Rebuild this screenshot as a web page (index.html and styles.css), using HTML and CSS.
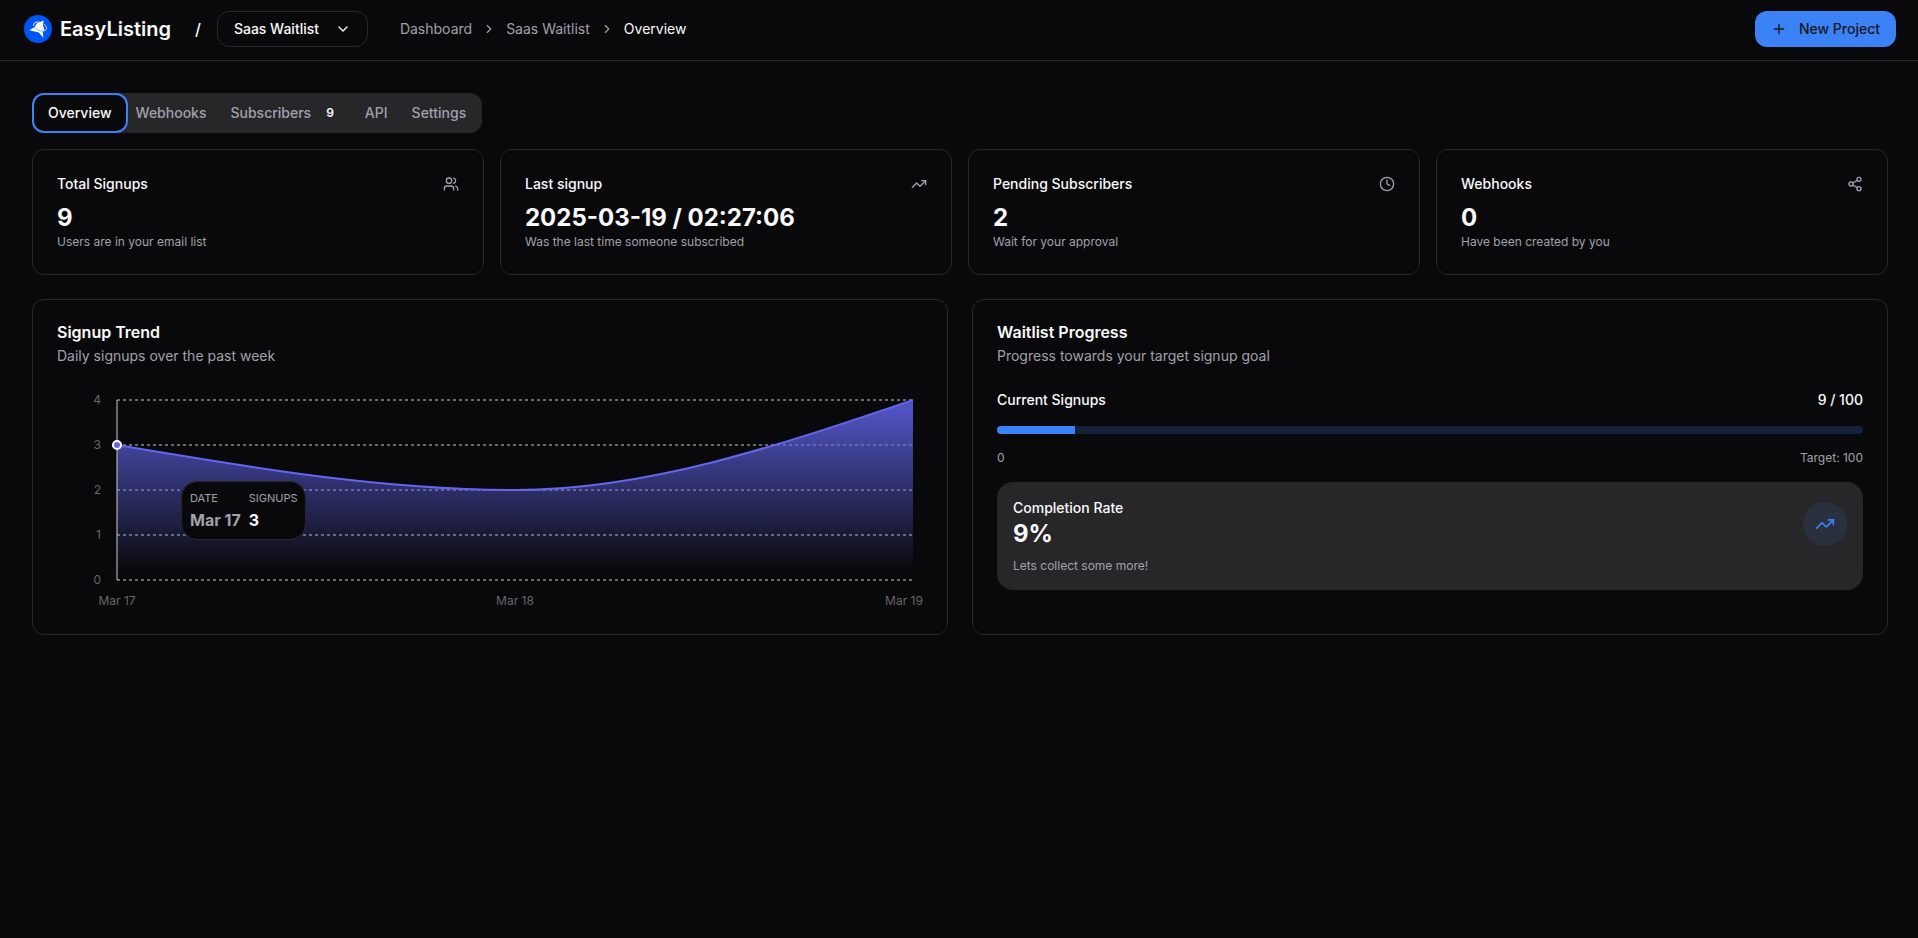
FILE: index.html
```html
<!DOCTYPE html>
<html lang="en">
  <head>
    <meta charset="UTF-8" />
    <meta name="viewport" content="width=device-width, initial-scale=1.0" />
    <title>EasyListing - Saas Waitlist</title>
    <link rel="stylesheet" href="styles.css">
  </head>
  <body>
    <header class="header">
      <a class="brand" href="#">
        <svg class="brand-logo" viewBox="0 0 28 28" aria-hidden="true">
          <circle cx="14" cy="14" r="14" fill="#0055f5" />
          <path d="M5.2 15.2 L10.8 12 L12.6 8.6 L19.6 5.6 L19 10.6 L20.4 14.8 L18.8 17 L19.4 22.8 L14.8 17.6 Z" fill="#fff" />
          <path d="M10 11 C8.4 8.2 12 6.4 15.6 7.2 M20 9.2 C23.8 12.4 22.8 15.8 19.4 16" fill="none" stroke="#fff" stroke-width="0.9" />
          <path d="M10 11.2 C12 14.6 16.6 16.6 20 16" fill="none" stroke="#0055f5" stroke-width="0.5" />
        </svg>
        <span>EasyListing</span>
      </a>
      <span class="slash">/</span>
      <div class="project-picker">
        <select class="project-select" aria-label="Project">
          <option>Saas Waitlist</option>
        </select>
        <svg class="icon picker-arrow" viewBox="0 0 24 24" aria-hidden="true"><path d="m6 9 6 6 6-6" /></svg>
      </div>
      <nav class="breadcrumb" aria-label="Breadcrumb">
        <a href="#">Dashboard</a>
        <svg class="icon icon-sm" viewBox="0 0 24 24" aria-hidden="true"><path d="m9 18 6-6-6-6" /></svg>
        <a href="#">Saas Waitlist</a>
        <svg class="icon icon-sm" viewBox="0 0 24 24" aria-hidden="true"><path d="m9 18 6-6-6-6" /></svg>
        <span class="current">Overview</span>
      </nav>
      <button class="new-project" type="button">
        <svg class="icon" viewBox="0 0 24 24" aria-hidden="true"><path d="M5 12h14M12 5v14" /></svg>
        New Project
      </button>
    </header>

    <main class="main">
      <div class="tabs" role="tablist">
        <button class="tab active" type="button" role="tab" aria-selected="true">Overview</button>
        <button class="tab" type="button" role="tab">Webhooks</button>
        <button class="tab" type="button" role="tab">Subscribers <span class="badge">9</span></button>
        <button class="tab" type="button" role="tab">API</button>
        <button class="tab" type="button" role="tab">Settings</button>
      </div>

      <section class="stats">
        <article class="card">
          <div class="stat-head">
            <h3>Total Signups</h3>
            <svg class="icon" viewBox="0 0 24 24" aria-hidden="true">
              <path d="M16 21v-2a4 4 0 0 0-4-4H6a4 4 0 0 0-4 4v2" />
              <circle cx="9" cy="7" r="4" />
              <path d="M22 21v-2a4 4 0 0 0-3-3.87M16 3.13a4 4 0 0 1 0 7.75" />
            </svg>
          </div>
          <div class="value">9</div>
          <p class="note">Users are in your email list</p>
        </article>
        <article class="card">
          <div class="stat-head">
            <h3>Last signup</h3>
            <svg class="icon" viewBox="0 0 24 24" aria-hidden="true">
              <path d="M22 7 13.5 15.5 8.5 10.5 2 17" />
              <path d="M16 7h6v6" />
            </svg>
          </div>
          <div class="value">2025-03-19 / 02:27:06</div>
          <p class="note">Was the last time someone subscribed</p>
        </article>
        <article class="card">
          <div class="stat-head">
            <h3>Pending Subscribers</h3>
            <svg class="icon" viewBox="0 0 24 24" aria-hidden="true">
              <circle cx="12" cy="12" r="10" />
              <path d="M12 6v6l4 2" />
            </svg>
          </div>
          <div class="value">2</div>
          <p class="note">Wait for your approval</p>
        </article>
        <article class="card">
          <div class="stat-head">
            <h3>Webhooks</h3>
            <svg class="icon" viewBox="0 0 24 24" aria-hidden="true">
              <circle cx="18" cy="5" r="3" />
              <circle cx="6" cy="12" r="3" />
              <circle cx="18" cy="19" r="3" />
              <path d="M8.59 13.51l6.83 3.98M15.41 6.51l-6.82 3.98" />
            </svg>
          </div>
          <div class="value">0</div>
          <p class="note">Have been created by you</p>
        </article>
      </section>

      <section class="panels">
        <article class="card">
          <h2>Signup Trend</h2>
          <p class="description">Daily signups over the past week</p>
          <div class="chart">
            <svg class="chart-svg" viewBox="0 0 866 220" role="img" aria-label="Signups per day">
              <defs>
                <linearGradient id="signups" x1="0" y1="0" x2="0" y2="1">
                  <stop offset="5%" stop-color="#6366f1" stop-opacity="0.8" />
                  <stop offset="95%" stop-color="#6366f1" stop-opacity="0" />
                </linearGradient>
              </defs>
              <g class="grid-lines">
                <path d="M60 10H856M60 55H856M60 100H856M60 145H856M60 190H856" />
              </g>
              <g class="axis y-axis">
                <text x="44" y="14">4</text>
                <text x="44" y="59">3</text>
                <text x="44" y="104">2</text>
                <text x="44" y="149">1</text>
                <text x="44" y="194">0</text>
              </g>
              <g class="axis x-axis">
                <text x="60" y="215">Mar 17</text>
                <text x="458" y="215">Mar 18</text>
                <text x="847" y="215">Mar 19</text>
              </g>
              <path d="M60 55C192.7 77.5 325.3 100 458 100C590.7 100 723.3 55 856 10V190H60Z" fill="url(#signups)" />
              <path class="trend" d="M60 55C192.7 77.5 325.3 100 458 100C590.7 100 723.3 55 856 10" />
              <path class="cursor" d="M60 10V190" />
              <circle class="dot" cx="60" cy="55" r="4" />
            </svg>
            <dl class="tooltip">
              <div>
                <dt>Date</dt>
                <dd class="muted">Mar 17</dd>
              </div>
              <div>
                <dt>Signups</dt>
                <dd>3</dd>
              </div>
            </dl>
          </div>
        </article>

        <article class="card">
          <h2>Waitlist Progress</h2>
          <p class="description">Progress towards your target signup goal</p>
          <div class="progress">
            <div class="row label">
              <span>Current Signups</span>
              <span>9 / 100</span>
            </div>
            <div class="bar" role="progressbar" aria-label="Current Signups" aria-valuenow="9" aria-valuemin="0" aria-valuemax="100">
              <div class="bar-fill" style="width: 9%"></div>
            </div>
            <div class="row note">
              <span>0</span>
              <span>Target: 100</span>
            </div>
            <div class="completion">
              <div class="row">
                <div>
                  <div class="label">Completion Rate</div>
                  <div class="value">9%</div>
                </div>
                <div class="trend-badge">
                  <svg class="icon icon-lg" viewBox="0 0 24 24" aria-hidden="true">
                    <path d="M22 7 13.5 15.5 8.5 10.5 2 17" />
                    <path d="M16 7h6v6" />
                  </svg>
                </div>
              </div>
              <p class="note">Lets collect some more!</p>
            </div>
          </div>
        </article>
      </section>
    </main>
  </body>
</html>
```
FILE: styles.css
```css
* {
  box-sizing: border-box;
}
body {
  margin: 0;
  min-height: 100vh;
  background-color: #09090b;
  color: #fafafa;
  font-family: "Inter", sans-serif;
  font-size: 14px;
  line-height: 20px;
}
h2,
h3,
p,
dl,
dd {
  margin: 0;
}
a {
  color: inherit;
  text-decoration: none;
}
button,
select {
  font: inherit;
  color: inherit;
  cursor: pointer;
}
.icon {
  width: 16px;
  height: 16px;
  flex-shrink: 0;
  fill: none;
  stroke: currentColor;
  stroke-width: 2;
  stroke-linecap: round;
  stroke-linejoin: round;
}
.icon-sm {
  width: 14px;
  height: 14px;
}
.icon-lg {
  width: 20px;
  height: 20px;
}

/* header */
.header {
  display: flex;
  align-items: center;
  padding: 11px 22px 13px 24px;
  border-bottom: 1px solid #27272a;
}
.brand {
  display: flex;
  align-items: center;
  gap: 8px;
  font-size: 20px;
  font-weight: 600;
}
.brand-logo {
  width: 28px;
  height: 28px;
}
.slash {
  margin: 0 16px 0 24px;
  font-size: 16px;
  font-weight: 500;
}
.project-picker {
  display: flex;
  align-items: center;
  position: relative;
}
.project-select {
  appearance: none;
  width: 151px;
  height: 36px;
  padding: 0 16px;
  background: #09090b;
  border: 1px solid #27272a;
  border-radius: 12px;
  font-weight: 500;
}
.picker-arrow {
  position: absolute;
  right: 17px;
  pointer-events: none;
}
.breadcrumb {
  display: flex;
  align-items: center;
  gap: 10px;
  margin-left: 32px;
  color: #a1a1aa;
}
.breadcrumb .current {
  color: #fafafa;
}
.new-project {
  display: flex;
  align-items: center;
  gap: 12px;
  height: 36px;
  margin-left: auto;
  padding: 0 16px;
  background: #3b82f6;
  color: #18181b;
  border: none;
  border-radius: 12px;
  font-weight: 500;
}

.main {
  display: flex;
  flex-direction: column;
  padding: 32px 30px 32px 32px;
}

/* tabs */
.tabs {
  display: flex;
  align-self: flex-start;
  padding: 4px;
  background: #27272a;
  color: #a1a1aa;
  border-radius: 12px;
}
.tab {
  display: flex;
  align-items: center;
  gap: 8px;
  height: 32px;
  padding: 0 12px;
  background: none;
  border: none;
  border-radius: 8px;
  font-weight: 500;
}
.tab.active {
  background: #09090b;
  color: #fafafa;
  box-shadow: 0 0 0 2px #09090b, 0 0 0 4px #3b82f6;
}
.badge {
  padding: 0 7px;
  color: #fafafa;
  font-size: 12px;
  font-weight: 600;
}

/* cards */
.stats {
  display: grid;
  grid-template-columns: repeat(4, 1fr);
  gap: 16px;
  margin-top: 16px;
}
.panels {
  display: grid;
  grid-template-columns: repeat(2, 1fr);
  gap: 24px;
  margin-top: 24px;
}
.card {
  padding: 24px;
  border: 1px solid #27272a;
  border-radius: 12px;
}
.stat-head {
  display: flex;
  align-items: center;
  justify-content: space-between;
  margin-bottom: 8px;
}
.stat-head .icon {
  color: #a1a1aa;
}
h3 {
  font-size: 14px;
  font-weight: 500;
}
h2 {
  margin-bottom: 6px;
  font-size: 16px;
  line-height: 16px;
  font-weight: 600;
}
.value {
  font-size: 24px;
  line-height: 32px;
  font-weight: 700;
}
.note {
  color: #a1a1aa;
  font-size: 12px;
  line-height: 16px;
}
.description {
  margin-bottom: 24px;
  color: #a1a1aa;
}
.label {
  font-weight: 500;
}

/* signup chart */
.chart {
  position: relative;
}
.chart-svg {
  display: block;
  width: 100%;
}
.grid-lines {
  stroke: #ccc;
  stroke-dasharray: 3 3;
}
.cursor {
  stroke: #ccc;
}
.axis {
  fill: #666;
  font-size: 12px;
}
.y-axis {
  text-anchor: end;
}
.x-axis {
  text-anchor: middle;
}
.trend {
  fill: none;
  stroke: #6366f1;
  stroke-width: 2;
}
.dot {
  fill: #6366f1;
  stroke: #fff;
  stroke-width: 2;
}
.tooltip {
  position: absolute;
  top: 91px;
  left: 124px;
  display: flex;
  gap: 8px;
  padding: 8px 8px 7px;
  background: #09090b;
  border: 1px solid #27272a;
  border-radius: 16px;
}
.tooltip dt {
  margin-bottom: 2px;
  color: #a1a1aa;
  font-size: 11px;
  line-height: 16px;
  text-transform: uppercase;
}
.tooltip dd {
  font-size: 16px;
  line-height: 24px;
  font-weight: 700;
}
.tooltip .muted {
  color: #a1a1aa;
}

/* waitlist progress */
.progress {
  display: flex;
  flex-direction: column;
  gap: 16px;
}
.row {
  display: flex;
  align-items: center;
  justify-content: space-between;
}
.bar {
  height: 8px;
  background: rgba(59, 130, 246, 0.2);
  border-radius: 4px;
  overflow: hidden;
}
.bar-fill {
  height: 100%;
  background: #3b82f6;
}
.completion {
  padding: 16px;
  background: #27272a;
  border-radius: 16px;
}
.completion .note {
  margin-top: 8px;
}
.trend-badge {
  padding: 12px;
  background: rgba(59, 130, 246, 0.1);
  color: #3b82f6;
  border-radius: 50%;
}
.trend-badge .icon {
  display: block;
}
```
